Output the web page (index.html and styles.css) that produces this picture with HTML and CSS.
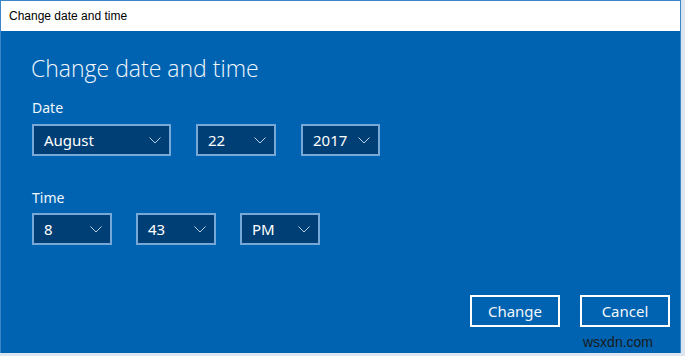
FILE: index.html
```html
<!DOCTYPE html>
<html>
<head>
<meta charset="utf-8">
<link rel="stylesheet" href="styles.css">
</head>
<body>
<div class="window">
  <div class="titlebar">Change date and time</div>
  <div class="content">
    <h1 class="heading">Change date and time</h1>
    <div class="label">Date</div>
    <div class="row date">
      <div class="select w139"><span>August</span><svg class="chev" viewBox="0 0 12 7" width="12" height="7"><path d="M0.5 0.5 L6 6 L11.5 0.5" fill="none" stroke="#b8d0ea" stroke-width="1"/></svg></div>
      <div class="select w80"><span>22</span><svg class="chev" viewBox="0 0 12 7" width="12" height="7"><path d="M0.5 0.5 L6 6 L11.5 0.5" fill="none" stroke="#b8d0ea" stroke-width="1"/></svg></div>
      <div class="select w79"><span>2017</span><svg class="chev" viewBox="0 0 12 7" width="12" height="7"><path d="M0.5 0.5 L6 6 L11.5 0.5" fill="none" stroke="#b8d0ea" stroke-width="1"/></svg></div>
    </div>
    <div class="label time">Time</div>
    <div class="row timerow">
      <div class="select w80"><span>8</span><svg class="chev" viewBox="0 0 12 7" width="12" height="7"><path d="M0.5 0.5 L6 6 L11.5 0.5" fill="none" stroke="#b8d0ea" stroke-width="1"/></svg></div>
      <div class="select w80"><span>43</span><svg class="chev" viewBox="0 0 12 7" width="12" height="7"><path d="M0.5 0.5 L6 6 L11.5 0.5" fill="none" stroke="#b8d0ea" stroke-width="1"/></svg></div>
      <div class="select w80"><span>PM</span><svg class="chev" viewBox="0 0 12 7" width="12" height="7"><path d="M0.5 0.5 L6 6 L11.5 0.5" fill="none" stroke="#b8d0ea" stroke-width="1"/></svg></div>
    </div>
    <div class="buttons">
      <div class="btn">Change</div>
      <div class="btn">Cancel</div>
    </div>
    <div class="watermark">wsxdn.com</div>
  </div>
</div>
</body>
</html>
```
FILE: styles.css
```css
html, body {
  margin: 0;
  padding: 0;
  background: #dde6ef;
  width: 685px;
  height: 356px;
  overflow: hidden;
}
.window {
  width: 679px;
  height: 353px;
  border-left: 1px solid #3a86c8;
  border-right: 1px solid #3a86c8;
  display: flex;
  flex-direction: column;
  font-family: "Noto Sans", "Open Sans", sans-serif;
}
.titlebar {
  height: 31px;
  background: #ffffff;
  color: #000;
  font-family: "Liberation Sans", sans-serif;
  font-size: 12px;
  line-height: 31px;
  padding-left: 8px;
  border-top: 1px solid #3a86c8;
  box-sizing: border-box;
}
.content {
  flex: 1;
  background: #0063b1;
  padding-left: 31px;
  color: #fff;
  position: relative;
}
.heading {
  margin: 21px 0 0 -1px;
  font-family: "Open Sans", sans-serif;
  font-weight: 300;
  font-size: 23px;
  line-height: 32px;
  color: #f2f7fc;
}
.label {
  margin-top: 14px;
  font-size: 14px;
  line-height: 20px;
  color: #f2f7fc;
}
.label.time {
  margin-top: 32px;
}
.row {
  display: flex;
  margin-top: 6px;
}
.row.date { gap: 25px; }
.row.timerow { gap: 24px; margin-top: 5px; }
.select {
  box-sizing: border-box;
  height: 32px;
  border: 2px solid #77a9d8;
  background: #003f75;
  display: flex;
  align-items: center;
  justify-content: space-between;
  padding: 0 8px 0 10px;
  font-size: 15px;
  color: #fff;
}
.chev {
  display: block;
}
.w139 { width: 139px; }
.w80 { width: 80px; }
.w79 { width: 79px; }
.buttons {
  position: absolute;
  left: 469px;
  top: 264px;
  display: flex;
  gap: 20px;
}
.btn {
  box-sizing: border-box;
  width: 90px;
  height: 32px;
  border: 2px solid #ffffff;
  display: flex;
  align-items: center;
  justify-content: center;
  font-size: 15px;
  color: #f2f7fc;
}
.watermark {
  position: absolute;
  left: 582px;
  top: 303px;
  font-family: "Liberation Sans", sans-serif;
  font-size: 14px;
  color: #1a1a1a;
}
```
